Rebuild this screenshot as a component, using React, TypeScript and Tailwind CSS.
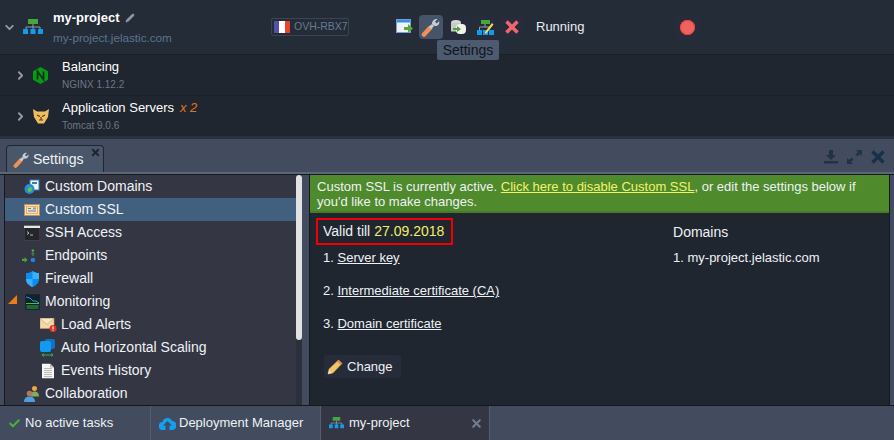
import type { ReactNode } from 'react'
import { Check, ChevronDown, ChevronRight, Pencil, X } from 'lucide-react'

function TopologyIcon({ small }: { small?: boolean }) {
  return (
    <svg width={small ? 15 : 20} height={small ? 12 : 16} viewBox="0 0 20 16">
      <rect x="5" y="0" width="10" height="5" fill="#46a83c" />
      <path d="M10 5v3M3 8h14M3 8v3M10 8v3M17 8v3" stroke="#8d9bb0" strokeWidth="1" fill="none" />
      <rect x="0" y="10" width="5" height="5" fill="#0d9cf0" />
      <rect x="7.5" y="10" width="5" height="5" fill="#0d9cf0" />
      <rect x="15" y="10" width="5" height="5" fill="#0d9cf0" />
    </svg>
  )
}

function WrenchIcon({ size = 20 }: { size?: number }) {
  return (
    <svg width={size} height={size} viewBox="0 0 20 20">
      <path d="M3 17.500 L9 11" stroke="#f28f55" strokeWidth="4.600" strokeLinecap="round" />
      <path d="M9 11 L12 8" stroke="#c9ced6" strokeWidth="3" />
      <path d="M11 7 C11 4 13.500 1.500 16.500 2.200 L14 4.600 L15.600 6.400 L18.200 4.200 C18.800 7 16.500 9.400 13.600 9 Z" fill="#c9ced6" />
    </svg>
  )
}

function ActionButton({ active, children }: { active?: boolean; children: ReactNode }) {
  return (
    <div
      className={`flex h-[24px] w-[24px] items-center justify-center rounded-[4px] ${
        active ? 'bg-[#46546a]' : 'bg-[#262c3a]'
      }`}
    >
      {children}
    </div>
  )
}

function NodeRow({
  icon,
  title,
  suffix,
  sub,
}: {
  icon: ReactNode
  title: string
  suffix?: string
  sub: string
}) {
  return (
    <div className="flex h-[41px] items-center border-t border-[#1b2028] bg-[#20262f]">
      <ChevronRight size={13} strokeWidth={3.5} className="ml-[14px] text-[#8c9bae]" />
      <div className="flex w-[27px] justify-center">{icon}</div>
      <div className="ml-[8px]">
        <div className="text-[13px] leading-[16px] text-white">
          {title}
          {suffix && <span className="ml-[6px] italic text-[#e0761c]">{suffix}</span>}
        </div>
        <div className="mt-[4px] text-[10px] leading-[12px] text-[#6d7686]">{sub}</div>
      </div>
    </div>
  )
}

const menuIcons: Record<string, ReactNode> = {
  domains: (
    <svg width="16" height="16" viewBox="0 0 16 16">
      <rect x="6" y="1" width="9" height="10" fill="#f2f6fb" stroke="#2f7fc4" />
      <rect x="8" y="3" width="5" height="2" fill="#2f7fc4" />
      <circle cx="5.5" cy="10" r="5" fill="#1f8fd6" />
      <path d="M3 7c2-1 3 1 2 2s-2 1-1 3 3 1 4-1-1-3-2-3" fill="#6cc04a" />
    </svg>
  ),
  ssl: (
    <svg width="16" height="12" viewBox="0 0 16 12">
      <rect x="0.5" y="0.5" width="15" height="11" fill="#f2dfb8" stroke="#c98d45" />
      <rect x="2.5" y="2.5" width="11" height="7" fill="none" stroke="#d6a868" strokeWidth="0.8" />
      <rect x="4" y="4" width="3" height="1" fill="#6b7fa0" />
      <rect x="4" y="6.5" width="8" height="1" fill="#6b7fa0" />
      <rect x="9" y="3.5" width="3" height="2" fill="#7fa0c4" />
    </svg>
  ),
  ssh: (
    <svg width="16" height="15" viewBox="0 0 16 15">
      <rect x="0" y="0" width="16" height="15" rx="1" fill="#23272b" stroke="#777" strokeWidth="0.5" />
      <rect x="0" y="0" width="16" height="2.5" fill="#e6e6e6" />
      <path d="M3 6l2 1.5L3 9M6 9.5h3" stroke="#ddd" strokeWidth="0.8" fill="none" />
    </svg>
  ),
  endpoints: (
    <svg width="22" height="16" viewBox="0 0 22 16">
      <circle cx="12" cy="2" r="1.5" fill="#46a83c" />
      <path d="M12 8V5M10.5 6L12 4.3 13.500 6" stroke="#46a83c" strokeWidth="1" fill="none" />
      <circle cx="12" cy="12.500" r="2.500" fill="#1c86dc" />
      <path d="M0 11h3V9l3 3.500-3 3v-2H0z" fill="#46a83c" />
    </svg>
  ),
  firewall: (
    <svg width="13" height="16" viewBox="0 0 13 16">
      <path d="M6.500 0C8.500 1.500 10.500 2 13 2v6c0 4-3 6.500-6.500 8C3 14.500 0 12 0 8V2c2.500 0 4.500-.5 6.500-2z" fill="#0d8df0" />
      <path d="M6.500 0C8.500 1.500 10.500 2 13 2v6H6.500zM6.500 8H0c0 4 3 6.500 6.500 8z" fill="#38b0fa" />
    </svg>
  ),
  monitoring: (
    <svg width="15" height="16" viewBox="0 0 15 16">
      <rect x="0" y="0" width="15" height="16" fill="#10222c" stroke="#334" strokeWidth="0.5" />
      <path d="M1 3l4 1 3 3 3 0 3 2" stroke="#3f90c8" fill="none" />
      <rect x="1" y="9" width="13" height="1" fill="#3ec24a" />
      <rect x="1.500" y="11" width="12" height="4" fill="#1c6b2e" />
    </svg>
  ),
  alerts: (
    <svg width="17" height="15" viewBox="0 0 17 15">
      <rect x="0" y="1" width="14" height="10" fill="#f0d9a4" stroke="#c79a55" strokeWidth="0.6" />
      <path d="M0 1l7 6 7-6" fill="#f7e8c4" stroke="#c79a55" strokeWidth="0.6" />
      <circle cx="13" cy="11" r="3.500" fill="#d9342b" />
      <rect x="12.500" y="8.800" width="1" height="2.800" fill="#fff" />
      <rect x="12.500" y="12.200" width="1" height="1" fill="#fff" />
    </svg>
  ),
  scaling: (
    <svg width="16" height="18" viewBox="0 0 16 18">
      <rect x="5" y="0" width="10" height="10" rx="2" fill="#0d72c8" />
      <rect x="0" y="2" width="11" height="11" rx="2" fill="#129af0" />
      <path d="M2 16h11M4 14.500L2 16l2 1.500M11 14.500l2 1.500-2 1.500" stroke="#2fb548" fill="none" />
    </svg>
  ),
  history: (
    <svg width="12" height="15" viewBox="0 0 12 15">
      <path d="M0 0h8l4 4v11H0z" fill="#f6f6f6" />
      <path d="M8 0l4 4H8z" fill="#bbb" />
      <path d="M2 5h8M2 7h8M2 9h8M2 11h8M2 13h8" stroke="#aaa" strokeWidth="0.8" />
    </svg>
  ),
  collaboration: (
    <svg width="16" height="17" viewBox="0 0 16 17">
      <circle cx="10.500" cy="3" r="2.500" fill="#f0a63c" />
      <path d="M7 11c0-4 1.500-5 3.500-5s4.500 1 4.500 5z" fill="#7fae5f" />
      <circle cx="5.500" cy="8" r="2.800" fill="#b07a58" />
      <path d="M0 16.500c0-4 2.500-5.500 5.500-5.500s5.500 1.500 5.500 5.500z" fill="#4f9fe0" />
    </svg>
  ),
}

const menu = [
  { key: 'domains', label: 'Custom Domains', indent: false },
  { key: 'ssl', label: 'Custom SSL', indent: false, selected: true },
  { key: 'ssh', label: 'SSH Access', indent: false },
  { key: 'endpoints', label: 'Endpoints', indent: false },
  { key: 'firewall', label: 'Firewall', indent: false },
  { key: 'monitoring', label: 'Monitoring', indent: false, expanded: true },
  { key: 'alerts', label: 'Load Alerts', indent: true },
  { key: 'scaling', label: 'Auto Horizontal Scaling', indent: true },
  { key: 'history', label: 'Events History', indent: true },
  { key: 'collaboration', label: 'Collaboration', indent: false },
]

const certs = ['Server key', 'Intermediate certificate (CA)', 'Domain certificate']

export default function App() {
  return (
    <div className="relative flex h-[440px] w-[894px] flex-col overflow-hidden bg-[#434c5e] font-['Liberation_Sans',Arial,sans-serif] text-[13px] text-[#eef2f6]">
      {/* Environment */}
      <div className="flex h-[54px] items-center bg-[#242c38]">
        <ChevronDown size={13} strokeWidth={3.5} className="ml-[3px] text-[#8c9bae]" />
        <div className="ml-[7px]">
          <TopologyIcon />
        </div>
        <div className="ml-[10px] w-[218px]">
          <div className="flex items-center text-[13px] font-bold leading-[16px] text-white">
            my-project
            <Pencil size={10} fill="#8c9bae" strokeWidth={1} className="ml-[6px] text-[#8c9bae]" />
          </div>
          <div className="mt-[5px] text-[11.7px] leading-[14px] text-[#5d7390]">my-project.jelastic.com</div>
        </div>
        <div className="flex h-[18px] w-[78px] items-center whitespace-nowrap rounded-[2px] border border-[#3a4454] pl-[2px] text-[10.5px] text-[#677a92]">
          <div className="flex h-[12px] w-[16px]">
            <div className="flex-1 bg-[#5452a8]" />
            <div className="flex-1 bg-white" />
            <div className="flex-1 bg-[#e8432c]" />
          </div>
          <span className="ml-[4px]">OVH-RBX7</span>
        </div>
        <div className="ml-[43px] flex gap-[3px]">
          <ActionButton>
            <svg width="17" height="16" viewBox="0 0 17 16">
              <rect x="0.500" y="0.500" width="14" height="13" fill="#eef3f9" stroke="#6fa3d8" />
              <rect x="1" y="1" width="13" height="2.500" fill="#3a8de0" />
              <path d="M8 8h4V5l5 4.500-5 4.500v-3H8z" fill="#57a83d" />
            </svg>
          </ActionButton>
          <ActionButton active>
            <WrenchIcon />
          </ActionButton>
          <ActionButton>
            <svg width="17" height="16" viewBox="0 0 17 16">
              <ellipse cx="6" cy="3.500" rx="5" ry="2.500" fill="#d8dad6" />
              <rect x="1" y="3.500" width="10" height="9" fill="#c9ccc6" />
              <rect x="6" y="5" width="10" height="10" rx="4" fill="#f2f2ee" />
              <path d="M3 9h4V7l4 3-4 3v-2H3z" fill="#4ea03a" />
            </svg>
          </ActionButton>
          <ActionButton>
            <svg width="17" height="17" viewBox="0 0 17 17">
              <rect x="4" y="1" width="9" height="4" fill="#46a83c" />
              <path d="M8 5v3M2.500 8h11M2.500 8v3" stroke="#99a" fill="none" />
              <rect x="0" y="11" width="5" height="5" fill="#0d9cf0" />
              <rect x="6" y="11" width="5" height="5" fill="#0d9cf0" />
              <rect x="12" y="11" width="5" height="5" fill="#0d9cf0" />
              <path d="M8 13l7-9 1.500 1.500-7 9H8z" fill="#f5d94e" />
            </svg>
          </ActionButton>
          <ActionButton>
            <svg width="16" height="16" viewBox="0 0 16 16">
              <path d="M2.500 2.500l11 11M13.500 2.500l-11 11" stroke="#f0666b" strokeWidth="3.600" />
            </svg>
          </ActionButton>
        </div>
        <span className="ml-[12px] w-[139px] text-[13px] text-[#e8edf2]">Running</span>
        <ActionButton>
          <div className="h-[15px] w-[15px] rounded-full bg-[#f0625c] [box-shadow:inset_0_0_0_1px_#e8453e]" />
        </ActionButton>
      </div>

      <NodeRow
        icon={
          <svg width="15" height="17" viewBox="0 0 15 17">
            <path d="M7.500 0L15 4.250v8.500L7.500 17 0 12.750v-8.500z" fill="#089a14" />
            <path d="M4.500 12.500v-8l6 8v-8" stroke="#10301a" strokeWidth="1.800" fill="none" />
          </svg>
        }
        title="Balancing"
        sub="NGINX 1.12.2"
      />
      <NodeRow
        icon={
          <svg width="16" height="15" viewBox="0 0 16 15">
            <path d="M0 0l4 2.500h8L16 0l-1 8-4 6.500H5L1 8z" fill="#eebf5e" />
            <path d="M4 6l3 1.500M12 6L9 7.500M6 11h4M8 8v3" stroke="#5a3c14" strokeWidth="1.200" fill="none" />
          </svg>
        }
        title="Application Servers"
        suffix="x 2"
        sub="Tomcat 9.0.6"
      />

      {/* Settings panel */}
      <div className="flex h-[36px] flex-col border-t-[3px] border-[#2a303d] bg-[#434c5e]">
        <div className="flex flex-1 items-end pl-[6px]">
          <div className="relative flex h-[27px] w-[98px] items-center rounded-t-[4px] border border-b-0 border-[#20262f] bg-[#4a5669] pl-[6px]">
            <WrenchIcon size={17} />
            <span className="ml-[3px] text-[14px] text-[#eef2f6]">Settings</span>
            <X size={11} strokeWidth={4} className="absolute right-[2px] top-[1px] text-[#1c2430]" />
          </div>
          <div className="ml-auto mr-[9px] flex items-center gap-[9px] self-center pt-[2px]">
            <svg width="14" height="14" viewBox="0 0 14 14">
              <path d="M5 0h4v5h3L7 10 2 5h3z" fill="#1f3347" />
              <rect x="0" y="11" width="14" height="2.500" fill="#1f3347" />
            </svg>
            <svg width="15" height="14" viewBox="0 0 15 14">
              <path d="M9 0h6v6l-2-2-2.500 2.500-2-2L11 2zM6 14H0V8l2 2 2.500-2.500 2 2L4 12z" fill="#1f3347" />
            </svg>
            <svg width="14" height="14" viewBox="0 0 14 14">
              <path d="M1.500 1.500l11 11M12.500 1.500l-11 11" stroke="#17314a" strokeWidth="3.400" />
            </svg>
          </div>
        </div>
      </div>
      <div className="h-[2px] bg-[#5c6679]" />

      <div className="flex h-[232px] border-y border-[#15191f] px-[4px]">
        {/* Tree */}
        <div className="flex w-[293px] flex-col border-l border-[#15191f] bg-[#343643]">
          {menu.map((item) => (
            <div
              key={item.key}
              className={`relative flex h-[23px] shrink-0 items-center text-[14px] ${
                item.selected ? 'bg-[#41607f]' : ''
              } ${item.indent ? 'pl-[56px]' : 'pl-[40px]'} text-[#eef2f6]`}
            >
              {item.expanded && (
                <div className="absolute left-[3px] top-[5px] h-0 w-0 border-b-[9px] border-l-[9px] border-b-[#ef7d16] border-l-transparent" />
              )}
              <div
                className={`absolute top-1/2 flex w-[20px] -translate-y-1/2 justify-center ${
                  item.indent ? 'left-[33px]' : 'left-[17px]'
                }`}
              >
                {menuIcons[item.key]}
              </div>
              {item.label}
            </div>
          ))}
        </div>
        <div className="w-[6px] bg-[#2c303c]">
          <div className="h-[165px] rounded-[3px] bg-[#e2e2e2]" />
        </div>
        <div className="w-[7px] bg-[#434c5e]" />

        {/* SSL details */}
        <div className="flex flex-1 flex-col border-x border-[#15191f] bg-[#20262f]">
          <div className="h-[38px] border-b-2 border-[#497a27] bg-[#4f8a2c] px-[7px] pt-[4px] text-[13px] leading-[15px] text-[#eef2f6]">
            <div className="w-[565px]">
              Custom SSL is currently active.{' '}
              <span className="text-[#f5f26a] underline">Click here to disable Custom SSL</span>, or edit the
              settings below if you'd like to make changes.
            </div>
          </div>
          <div className="flex flex-1 pl-[6px] pt-[5px]">
            <div className="w-[357px]">
              <div className="flex h-[27px] w-[137px] items-center border-2 border-[#f00000] pl-[5px] text-[14px]">
                Valid till <span className="ml-[4px] text-[#f3ee6e]">27.09.2018</span>
              </div>
              <div className="mt-[5px] flex flex-col gap-[18px] pl-[7px]">
                {certs.map((cert, i) => (
                  <div key={cert} className="h-[15px] text-[13px] leading-[15px]">
                    {i + 1}. <span className="underline">{cert}</span>
                  </div>
                ))}
              </div>
              <div className="ml-[8px] mt-[24px] flex h-[23px] w-[77px] items-center rounded-[3px] bg-[#262c3a] pl-[3px] text-[13px]">
                <svg width="16" height="16" viewBox="0 0 16 16">
                  <path d="M1 15l1-5L11.500 1 15 4.500 6 14z" fill="#f0c766" stroke="#c98d45" strokeWidth="0.6" />
                  <path d="M1 15l1-4 3 3z" fill="#f4e1c0" />
                  <path d="M11.500 1L15 4.500 13.500 6 10 2.500z" fill="#e88a5a" />
                </svg>
                <span className="ml-[4px]">Change</span>
              </div>
            </div>
            <div>
              <div className="flex h-[27px] items-center pt-[1px] text-[14px]">Domains</div>
              <div className="mt-[5px] text-[13px] leading-[15px]">1. my-project.jelastic.com</div>
            </div>
          </div>
        </div>
      </div>

      {/* Task bar */}
      <div className="flex flex-1 items-center bg-[#434c5e] text-[13px]">
        <div className="flex h-full w-[151px] items-center border-r border-[#555e70] pl-[8px]">
          <Check size={13} strokeWidth={3.5} className="text-[#45b53c]" />
          <span className="ml-[4px]">No active tasks</span>
        </div>
        <div className="flex h-full w-[169px] items-center pl-[8px]">
          <svg width="17" height="14" viewBox="0 0 17 14">
            <path d="M4 14a4 4 0 0 1-.5-8A5 5 0 0 1 13 5a4.500 4.500 0 0 1 0 9h-2.500V9.500H13L8.500 5 4 9.500h2.500V14z" fill="#12a0f5" />
          </svg>
          <span className="ml-[3px]">Deployment Manager</span>
        </div>
        <div className="flex h-full w-[170px] items-center border-x border-[#555e70] bg-[#343643] pl-[8px]">
          <TopologyIcon small />
          <span className="ml-[5px]">my-project</span>
          <X size={13} strokeWidth={4} className="ml-[60px] text-[#737c8e]" />
        </div>
      </div>

      {/* Tooltip */}
      <div className="absolute left-[437px] top-[40px] flex h-[20px] w-[62px] items-center justify-center rounded-[2px] bg-[#4e5a70] text-[14px] text-[#10151c]">
        Settings
      </div>
    </div>
  )
}
